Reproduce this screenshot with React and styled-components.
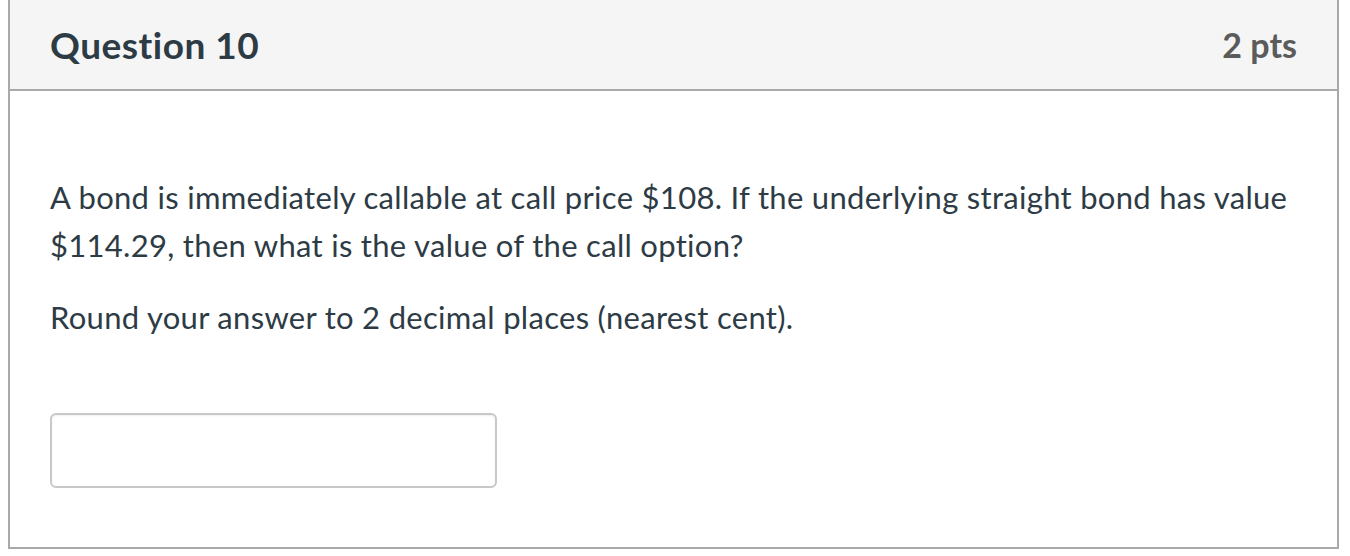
import React from "react";
import styled, { createGlobalStyle } from "styled-components";

const GlobalStyle = createGlobalStyle`
  html, body {
    margin: 0;
    padding: 0;
    background: #ffffff;
  }
  body {
    padding: 0 8px;
    font-family: Lato, "Open Sans", "Liberation Sans", sans-serif;
    font-variant-ligatures: none;
    color: #2d3b45;
  }
`;

const Card = styled.section`
  width: 1331px;
  box-sizing: border-box;
  border: 2px solid #a9a9a9;
  border-top: none;
  background: #ffffff;
`;

const Header = styled.header`
  height: 91px;
  box-sizing: border-box;
  display: flex;
  align-items: center;
  justify-content: space-between;
  padding: 0 40px 0 40px;
  background: #f5f5f5;
  border-bottom: 2px solid #a9a9a9;
`;

const Title = styled.h2`
  margin: 0;
  font-size: 37px;
  letter-spacing: 0.5px;
  font-weight: 700;
  color: #2d3b45;
`;

const Points = styled.span`
  font-size: 34px;
  font-weight: 700;
  color: #5b5b5b;
`;

const Body = styled.div`
  padding: 82px 40px 59px 40px;
`;

const Text = styled.p`
  margin: 0 0 ${(p) => (p.$last ? "0" : "24px")} 0;
  font-size: 31px;
  letter-spacing: 0.3px;
  line-height: 48px;
  color: #2d3b45;
`;

const AnswerInput = styled.input`
  display: block;
  margin-top: 72px;
  width: 447px;
  height: 75px;
  box-sizing: border-box;
  border: 2px solid #c8c8c8;
  border-radius: 6px;
  box-shadow: inset 0 1px 2px rgba(0, 0, 0, 0.06);
  background: #ffffff;
  font-family: inherit;
  font-size: 28px;
  padding: 0 14px;
  outline: none;
`;

function App() {
  return (
    <>
      <GlobalStyle />
      <Card>
        <Header>
          <Title>Question 10</Title>
          <Points>2 pts</Points>
        </Header>
        <Body>
          <Text>
            A bond is immediately callable at call price $108. If the underlying
            straight bond has value $114.29, then what is the value of the call
            option?
          </Text>
          <Text $last>Round your answer to 2 decimal places (nearest cent).</Text>
          <AnswerInput type="text" />
        </Body>
      </Card>
    </>
  );
}

export default App;
